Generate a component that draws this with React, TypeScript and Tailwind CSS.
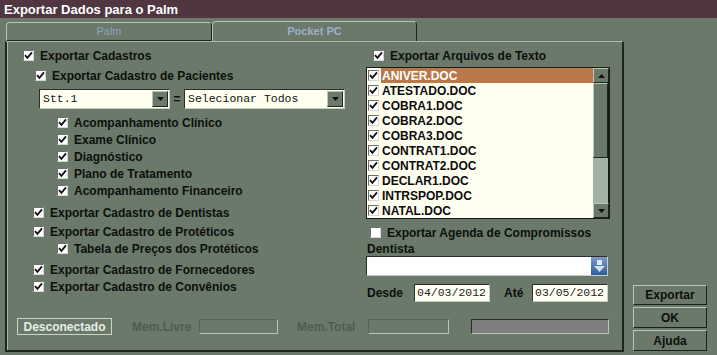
import React from "react";

const files = [
  "ANIVER.DOC",
  "ATESTADO.DOC",
  "COBRA1.DOC",
  "COBRA2.DOC",
  "COBRA3.DOC",
  "CONTRAT1.DOC",
  "CONTRAT2.DOC",
  "DECLAR1.DOC",
  "INTRSPOP.DOC",
  "NATAL.DOC",
];

const CheckBox: React.FC<{ checked?: boolean }> = ({ checked = true }) => (
  <span className="w-[11px] h-[11px] shrink-0 bg-white border border-t-[#6f6f6f] border-l-[#6f6f6f] border-r-[#d8d8d8] border-b-[#d8d8d8] flex items-center justify-center">
    {checked && (
      <svg width="9" height="9" viewBox="0 0 9 9">
        <path d="M1 4.2 L3.4 6.8 L8 1.4" stroke="#111" strokeWidth="1.8" fill="none" />
      </svg>
    )}
  </span>
);

const Item: React.FC<{ label: string; className?: string; checked?: boolean }> = ({
  label,
  className = "",
  checked = true,
}) => (
  <div className={"flex items-center h-[17px] gap-[6px] " + className}>
    <CheckBox checked={checked} />
    <span className="text-[12px] font-bold text-[#0c100c] leading-none whitespace-nowrap">{label}</span>
  </div>
);

const DownArrow = () => (
  <svg width="7" height="4" viewBox="0 0 7 4">
    <path d="M0 0 H7 L3.5 4 Z" fill="#111" />
  </svg>
);

const ArrowBtn: React.FC<{ up?: boolean; className?: string }> = ({ up, className = "" }) => (
  <span
    className={
      "w-[16px] shrink-0 bg-[#6a796a] border border-t-[#b9c9b9] border-l-[#b9c9b9] border-r-[#1e251e] border-b-[#1e251e] flex items-center justify-center " +
      className
    }
  >
    <span className={up ? "rotate-180 flex" : "flex"}>
      <DownArrow />
    </span>
  </span>
);

const Combo: React.FC<{ value: string; className?: string }> = ({ value, className = "" }) => (
  <div
    className={
      "h-[20px] bg-[#fffff0] border border-t-[#2a2f2a] border-l-[#2a2f2a] border-r-[#c4d0c4] border-b-[#c4d0c4] flex items-center justify-between " +
      className
    }
  >
    <span className="pl-[3px] font-['Liberation_Mono',monospace] text-[11.5px] text-[#111]">{value}</span>
    <ArrowBtn className="h-[16px] mr-[1px]" />
  </div>
);

const Button: React.FC<{ label: string; className?: string }> = ({ label, className = "" }) => (
  <button
    className={
      "w-[74px] bg-[#6a796a] border border-t-[#b9c9b9] border-l-[#b9c9b9] border-r-[#1a201a] border-b-[#1a201a] text-[12px] font-bold text-[#0c100c] flex items-center justify-center " +
      className
    }
  >
    {label}
  </button>
);

export default function App() {
  return (
    <div className="w-[717px] h-[355px] overflow-hidden bg-[#6a796a] font-['Liberation_Sans',Arial,sans-serif]">
      {/* title */}
      <div className="h-[18px] bg-[#4f3641] flex items-center pl-[4px]">
        <span className="text-white font-bold text-[13px] leading-none">Exportar Dados para o Palm</span>
      </div>

      <div className="flex">
        <div className="ml-[5px] mt-[2px] w-[619px] flex flex-col">
          {/* tabs */}
          <div className="h-[21px] flex items-end">
            <div className="ml-[1px] w-[206px] h-[19px] rounded-t-[4px] border border-t-[#b5c5b5] border-l-[#b5c5b5] border-r-[#1e251e] border-b-[#1e251e] flex items-center justify-center">
              <span className="text-[11px] text-[#8ea2b8]">Palm</span>
            </div>
            <div className="w-[205px] h-[20px] rounded-t-[4px] border-t border-l border-r border-t-[#b5c5b5] border-l-[#b5c5b5] border-r-[#1e251e] flex items-center justify-center">
              <span className="text-[11px] font-bold text-[#9db0cc]">Pocket PC</span>
            </div>
          </div>

          {/* panel */}
          <div className="h-[311px] border-t border-l-2 border-r-2 border-b-2 border-t-[#a9b9a9] border-l-[#1e251e] border-r-[#1e251e] border-b-[#1e251e] shadow-[inset_1px_0_0_#a9b9a9] flex flex-col">
            <div className="h-[276px] flex">
              {/* left column */}
              <div className="w-[359px] flex flex-col">
                <Item className="mt-[5px] ml-[16px]" label="Exportar Cadastros" />
                <Item className="mt-[3px] ml-[28px]" label="Exportar Cadastro de Pacientes" />
                <div className="mt-[5px] ml-[32px] h-[20px] flex items-center">
                  <Combo className="w-[131px]" value="Stt.1" />
                  <span className="w-[14px] text-center text-[12px] font-bold text-[#111]">=</span>
                  <Combo className="w-[161px]" value="Selecionar Todos" />
                </div>
                <div className="mt-[5px] ml-[50px] flex flex-col">
                  <Item label="Acompanhamento Clínico" />
                  <Item label="Exame Clínico" />
                  <Item label="Diagnóstico" />
                  <Item label="Plano de Tratamento" />
                  <Item label="Acompanhamento Financeiro" />
                </div>
                <Item className="mt-[5px] ml-[26px]" label="Exportar Cadastro de Dentistas" />
                <Item className="mt-[2px] ml-[26px]" label="Exportar Cadastro de Protéticos" />
                <Item className="ml-[50px]" label="Tabela de Preços dos Protéticos" />
                <Item className="mt-[4px] ml-[26px]" label="Exportar Cadastro de Fornecedores" />
                <Item className="ml-[26px]" label="Exportar Cadastro de Convênios" />
              </div>

              {/* right column */}
              <div className="w-[244px] flex flex-col">
                <Item className="mt-[5px] ml-[7px] gap-[5px]" label="Exportar Arquivos de Texto" />
                <div className="mt-[3px] h-[152px] border border-[#1a1a1a] bg-[#fffff0] flex">
                  <div className="flex-1 flex flex-col">
                    {files.map((f, i) => (
                      <div key={f} className="h-[15px] flex items-center">
                        <span className="ml-[1px] flex">
                          <CheckBox />
                        </span>
                        <span
                          className={
                            i === 0
                              ? "ml-[2px] flex-1 h-[15px] pl-[1px] bg-[#b8784a] text-white text-[12px] font-bold flex items-center"
                              : "ml-[2px] flex-1 h-[15px] pl-[1px] text-[#0c0c0c] text-[12px] font-bold flex items-center"
                          }
                        >
                          {f}
                        </span>
                      </div>
                    ))}
                  </div>
                  <div className="w-[16px] flex flex-col border-r border-[#1a1a1a]">
                    <ArrowBtn up className="h-[15px] w-[16px]" />
                    <div className="h-[75px] bg-[#6a796a] border border-t-[#b9c9b9] border-l-[#b9c9b9] border-r-[#1e251e] border-b-[#1e251e]" />
                    <div className="h-[45px] bg-[#a3b3a3]" />
                    <ArrowBtn className="h-[15px] w-[16px]" />
                  </div>
                </div>
                <Item className="mt-[5px] ml-[4px]" checked={false} label="Exportar Agenda de Compromissos" />
                <div className="h-[15px] ml-[1px] flex items-center">
                  <span className="text-[12px] font-bold text-[#0c100c]">Dentista</span>
                </div>
                <div className="h-[20px] w-[242px] bg-white border border-t-[#2a2f2a] border-l-[#2a2f2a] border-r-[#c4d0c4] border-b-[#c4d0c4] flex items-center justify-end">
                  <span className="w-[16px] h-[18px] flex">
                    <svg width="16" height="18" viewBox="0 0 16 18">
                      <defs>
                        <linearGradient id="dg" x1="0" y1="0" x2="0" y2="1">
                          <stop offset="0" stopColor="#7a9cc8" />
                          <stop offset="1" stopColor="#2f5d9a" />
                        </linearGradient>
                      </defs>
                      <rect x="0" y="0" width="16" height="18" fill="url(#dg)" />
                      <rect x="6" y="3" width="5" height="5" fill="#dfe9f6" />
                      <path d="M3 9 H14 L8.5 15 Z" fill="#cfe0f4" />
                    </svg>
                  </span>
                </div>
                <div className="mt-[8px] h-[18px] flex items-center">
                  <span className="ml-[1px] w-[47px] text-[12px] font-bold text-[#0c100c]">Desde</span>
                  <span className="w-[76px] h-[18px] bg-[#fffff4] border border-t-[#2a2f2a] border-l-[#2a2f2a] border-r-[#c4d0c4] border-b-[#c4d0c4] flex items-center pl-[2px] font-['Liberation_Mono',monospace] text-[11.5px] text-[#222]">
                    04/03/2012
                  </span>
                  <span className="ml-[14px] w-[28px] text-[12px] font-bold text-[#0c100c]">Até</span>
                  <span className="w-[76px] h-[18px] bg-[#fffff4] border border-t-[#2a2f2a] border-l-[#2a2f2a] border-r-[#c4d0c4] border-b-[#c4d0c4] flex items-center pl-[2px] font-['Liberation_Mono',monospace] text-[11.5px] text-[#222]">
                    03/05/2012
                  </span>
                </div>
              </div>
            </div>

            {/* status row */}
            <div className="h-[17px] flex items-center">
              <span className="ml-[10px] w-[95px] h-[17px] border border-[#c8d6c8] flex items-center justify-center text-[12px] font-bold text-[#e6eee6]">
                Desconectado
              </span>
              <span className="ml-[20px] w-[67px] text-[12px] font-bold text-[#4e5d4e]">Mem.Livre</span>
              <span className="w-[79px] h-[15px] border border-t-[#556455] border-l-[#556455] border-r-[#b8c8b8] border-b-[#b8c8b8]" />
              <span className="ml-[19px] w-[71px] text-[12px] font-bold text-[#4e5d4e]">Mem.Total</span>
              <span className="w-[81px] h-[15px] border border-t-[#556455] border-l-[#556455] border-r-[#b8c8b8] border-b-[#b8c8b8]" />
              <span className="ml-[22px] w-[138px] h-[15px] bg-[#7e7e7e] border border-t-[#2a2a2a] border-l-[#2a2a2a] border-r-[#b8c8b8] border-b-[#b8c8b8]" />
            </div>
          </div>
        </div>

        {/* buttons */}
        <div className="ml-[9px] mt-[267px] flex flex-col gap-[2px]">
          <Button className="h-[20px]" label="Exportar" />
          <Button className="h-[21px]" label="OK" />
          <Button className="h-[21px]" label="Ajuda" />
        </div>
      </div>
    </div>
  );
}
